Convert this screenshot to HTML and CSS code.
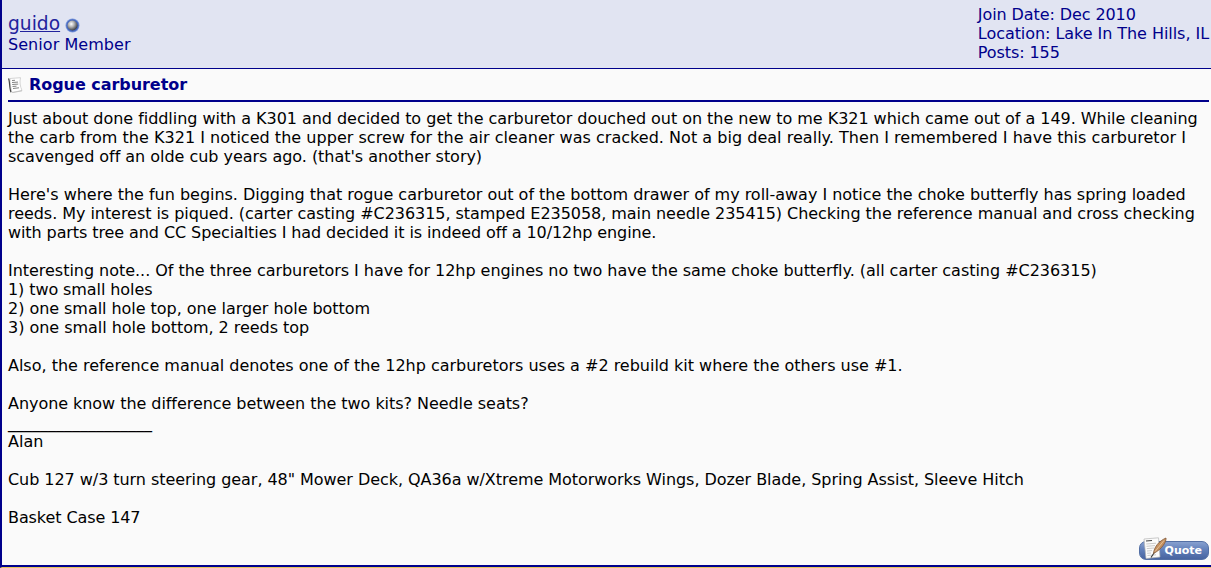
FILE: index.html
```html
<!DOCTYPE html>
<html lang="en">
<head>
    <meta charset="UTF-8">
    <title>Rogue carburetor</title>
    <link rel="stylesheet" href="styles.css">
</head>
<body>
    <div class="post">
        <div class="post-head">
            <div class="user">
                <div class="user-name">
                    <a href="#">guido</a>
                    <svg class="status" width="15" height="15" viewBox="0 0 15 15">
                        <defs>
                            <radialGradient id="orb" cx="0.38" cy="0.35" r="0.65">
                                <stop offset="0" stop-color="#ffffff"/>
                                <stop offset="0.45" stop-color="#b4b4b4"/>
                                <stop offset="1" stop-color="#404248"/>
                            </radialGradient>
                        </defs>
                        <circle cx="7.5" cy="7.5" r="7" fill="#7f9bdc"/>
                        <circle cx="7.5" cy="7.5" r="6.2" fill="#4668c0"/>
                        <circle cx="7.5" cy="7.5" r="5" fill="url(#orb)"/>
                    </svg>
                </div>
                <div class="user-title">Senior Member</div>
            </div>
            <div class="user-info">
                <div class="t5">Join Date: Dec 2010</div>
                <div class="t4">Location: Lake In The Hills, IL</div>
                <div class="t5">Posts: 155</div>
            </div>
        </div>

        <div class="post-body">
            <div class="post-title">
                <svg width="16" height="16" viewBox="0 0 16 16">
                    <path d="M2 1.5 L12.5 .7 C11.5 5 12 9 14 13.5 L4 15.5 C2.6 11 2.2 6 2 1.5Z" fill="#fff" stroke="#bbb" stroke-width=".6"/>
                    <path d="M.5 1.5 C1.8 3 1.3 12 3 15.2" fill="none" stroke="#444" stroke-width="1.2"/>
                    <path d="M4 3.5 L7 3.3 M4 5.5 L10 5.1 M4.2 7.5 L10.2 7.1 M4.5 9.5 L8.5 9.2 M5 11.5 L11 10.8" stroke="#777" stroke-width=".9"/>
                    <path d="M4.5 15.6 L14 13.8" stroke="#bbb" stroke-width=".8"/>
                </svg>
                <strong class="t4">Rogue carburetor</strong>
            </div>

            <div class="message">
                <span class="t3">Just about done fiddling with a K301 and decided to get the carburetor douched out on the new to me K321 which came out of a 149. While cleaning</span><br>
                <span class="wide">the carb from the K321 I noticed the upper screw for the air cleaner was cracked. Not a big deal really. Then I remembered I have this carburetor I</span><br>
                <span class="t2">scavenged off an olde cub years ago. (that's another story)</span><br>
                <br>
                <span class="t1">Here's where the fun begins. Digging that rogue carburetor out of the bottom drawer of my roll-away I notice the choke butterfly has spring loaded</span><br>
                <span class="t4">reeds. My interest is piqued. (carter casting #C236315, stamped E235058, main needle 235415) Checking the reference manual and cross checking</span><br>
                <span class="t5">with parts tree and CC Specialties I had decided it is indeed off a 10/12hp engine.</span><br>
                <br>
                <span class="t2">Interesting note... Of the three carburetors I have for 12hp engines no two have the same choke butterfly. (all carter casting #C236315)</span><br>
                <span class="t5">1) two small holes</span><br>
                <span class="t3">2) one small hole top, one larger hole bottom</span><br>
                <span class="t2">3) one small hole bottom, 2 reeds top</span><br>
                <br>
                <span class="t0">Also, the reference manual denotes one of the 12hp carburetors uses a #2 rebuild kit where the others use #1.</span><br>
                <br>
                <span class="t4">Anyone know the difference between the two kits? Needle seats?</span>
            </div>

            <div class="signature">
                __________________<br>
                Alan<br>
                <br>
                <span class="t4">Cub 127 w/3 turn steering gear, 48" Mower Deck, QA36a w/Xtreme Motorworks Wings, Dozer Blade, Spring Assist, Sleeve Hitch</span><br>
                <br>
                <span class="t5">Basket Case 147</span>
            </div>

            <div class="actions">
                <a href="#" class="quote">
                    <svg width="28" height="24" viewBox="0 0 28 24">
                        <path d="M3 2 L17.5 .8 L19 20 L5 21.5 Z" fill="#fbfbfb" stroke="#b5b5b5" stroke-width=".7"/>
                        <path d="M5 4 L11 3.5" stroke="#444" stroke-width="1.2"/>
                        <path d="M5.3 7 L15 6.2 M5.5 9.3 L14 8.6 M5.8 11.6 L13 11 M6 14 L11 13.6 M6.2 16.3 L10 16 M6.5 18.5 L15 17.8" stroke="#bcbcbc" stroke-width=".8"/>
                        <path d="M10 20.5 L15 13" stroke="#333" stroke-width="1.1"/>
                        <path d="M12.5 16.5 C13 10 18 4 25 1 C25.5 5 21 12 12.5 16.5Z" fill="#c4905f" stroke="#80583a" stroke-width=".8"/>
                        <path d="M14 14.5 L23 3.5" stroke="#e6c39b" stroke-width=".9"/>
                    </svg>
                    <span>Quote</span>
                </a>
            </div>
        </div>
    </div>
</body>
</html>
```

FILE: styles.css
```css
body {
    margin: 0;
    background-color: #fafafa;
    color: #000;
    font-family: "DejaVu Sans", Verdana, sans-serif;
    font-size: 16px;
    line-height: 19px;
    overflow: hidden;
}
.post {
    box-sizing: border-box;
    height: 568px;
    border-left: 2px solid #00008b;
    border-bottom: 1px solid #e8c75a;
    display: flex;
    flex-direction: column;
}
.post-head {
    box-sizing: border-box;
    height: 69px;
    display: flex;
    justify-content: space-between;
    padding: 5px 2px 0 6px;
    background-color: #e1e4f2;
    border-bottom: 1px solid #00008b;
    color: #00008b;
    white-space: nowrap;
}
.user {
    padding-top: 7px;
}
.user-name {
    height: 23px;
    line-height: 23px;
    display: flex;
    align-items: center;
    gap: 5px;
}
.user-name a {
    color: #22229c;
    font-size: 18.67px;
}
.user-title {
    letter-spacing: 0.06px;
}
.status {
    margin-top: 4px;
}
.post-body {
    flex: 1;
    display: flex;
    flex-direction: column;
    padding: 6px 2px 0 6px;
    border-bottom: 2px solid #00008b;
}
.post-title {
    height: 25px;
    display: flex;
    gap: 5px;
    border-bottom: 2px solid #00008b;
    color: #00008b;
}
.post-title svg {
    margin-top: 2px;
}
.message {
    padding-top: 7px;
    white-space: nowrap;
}
/* line tracking */
.wide {
    letter-spacing: 0.03px;
}
.t0 {
    letter-spacing: -0.01px;
}
.t1 {
    letter-spacing: -0.02px;
}
.t2 {
    letter-spacing: -0.032px;
}
.t3 {
    letter-spacing: -0.042px;
}
.t4 {
    letter-spacing: -0.052px;
}
.t5 {
    letter-spacing: -0.09px;
}
.actions {
    margin-top: auto;
    padding-bottom: 5px;
    display: flex;
    justify-content: flex-end;
}
.quote {
    position: relative;
    box-sizing: border-box;
    width: 70px;
    height: 19px;
    padding-right: 6px;
    border: 1px solid #536fa5;
    border-radius: 7px;
    background: linear-gradient(#87a0cf, #5f7db8 50%, #4864a0);
    color: #fff;
    font-size: 11px;
    font-weight: bold;
    line-height: 18px;
    text-align: right;
    text-decoration: none;
}
.quote svg {
    position: absolute;
    left: 1px;
    top: -5px;
}
```
